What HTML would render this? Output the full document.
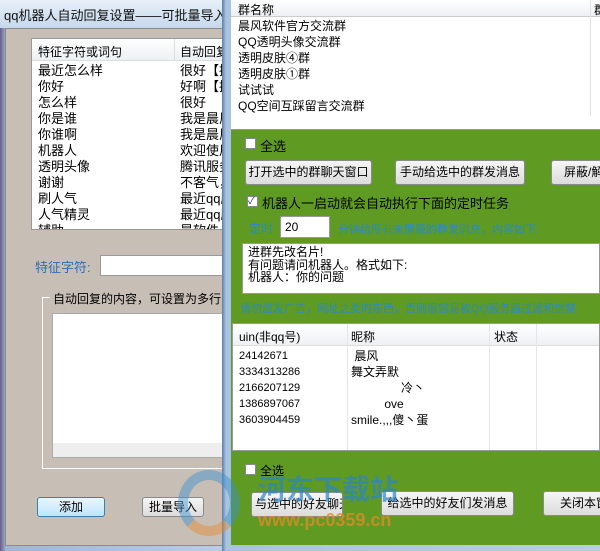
<!DOCTYPE html>
<html><head><meta charset="utf-8"><style>
*{margin:0;padding:0;box-sizing:border-box}
body{width:600px;height:551px;overflow:hidden;position:relative;background:#6f86a8;font-family:"Liberation Sans","Noto Sans CJK SC",sans-serif;font-size:12px;color:#000}
.a{position:absolute}
.btn{position:absolute;background:linear-gradient(#f6f6f6,#dcdcdc);border:1px solid #8a8a8a;border-radius:3px;text-align:center;font-size:12px;white-space:nowrap;overflow:hidden}
</style></head><body>
<!-- left window -->
<div class="a" style="left:0;top:0;width:226px;height:551px;background:linear-gradient(90deg,#6a5a8a,#9fb6d6 6px,#b9cde6)"></div>
<div class="a" style="left:0;top:0;width:226px;height:28px;background:linear-gradient(#e8f0f8,#c5d8ec)"></div>
<div class="a" style="left:4px;top:5px;font-size:13px;white-space:nowrap;color:#111">qq机器人自动回复设置——可批量导入别人</div>
<div class="a" style="left:5px;top:28px;width:221px;height:518px;background:#c7bfb5;border:1px solid #8e8a86"></div>
<div class="a" style="left:31px;top:38px;width:195px;height:192px;background:#fff;border:1px solid #999;overflow:hidden">
 <div class="a" style="left:0;top:0;width:195px;height:22px;background:linear-gradient(#fff,#eef0f3);border-bottom:1px solid #ddd"></div>
 <div class="a" style="left:6px;top:4px">特征字符或词句</div>
 <div class="a" style="left:142px;top:0;width:1px;height:22px;background:#ddd"></div>
 <div class="a" style="left:148px;top:4px;white-space:nowrap">自动回复</div>
 <div class="a" style="left:6px;top:24px;line-height:16px;font-size:13px">最近怎么样<br>你好<br>怎么样<br>你是谁<br>你谁啊<br>机器人<br>透明头像<br>谢谢<br>刷人气<br>人气精灵<br>辅助</div>
 <div class="a" style="left:148px;top:24px;line-height:16px;font-size:13px;white-space:nowrap">很好【换<br>好啊【换<br>很好<br>我是晨风<br>我是晨风<br>欢迎使用<br>腾讯服务<br>不客气，<br>最近qq服<br>最近qq服<br>晨软件品</div>
</div>
<div class="a" style="left:35px;top:257px;color:#2f6fb5;font-size:13px">特征字符:</div>
<div class="a" style="left:100px;top:255px;width:126px;height:21px;background:#fff;border:1px solid #999"></div>
<div class="a" style="left:42px;top:297px;width:184px;height:172px;border:1px solid #fff;border-right:none"></div>
<div class="a" style="left:50px;top:290px;background:#c7bfb5;padding:0 3px;white-space:nowrap">自动回复的内容，可设置为多行</div>
<div class="a" style="left:52px;top:313px;width:174px;height:145px;background:#fff;border:1px solid #aaa"></div>
<div class="a" style="left:53px;top:443px;width:173px;height:14px;background:#eee"></div>
<div class="btn" style="left:37px;top:497px;width:68px;height:20px;line-height:18px;border-color:#3c7fb1;background:linear-gradient(#eaf6fd,#bee6fd)">添加</div>
<div class="btn" style="left:142px;top:497px;width:62px;height:20px;line-height:18px">批量导入</div>
<!-- right window frame -->
<div class="a" style="left:222px;top:0;width:378px;height:551px;background:linear-gradient(90deg,#5b7da6,#a9c3e0 4px,#b7cde6)"></div>
<div class="a" style="left:231px;top:0;width:369px;height:130px;background:#fff;border-bottom:1px solid #999"></div>
<div class="a" style="left:231px;top:0;width:369px;height:17px;background:linear-gradient(#fff,#eef0f3);border-bottom:1px solid #ccc"></div>
<div class="a" style="left:238px;top:1px">群名称</div>
<div class="a" style="left:590px;top:0;width:1px;height:116px;background:#e3e3e3"></div>
<div class="a" style="left:594px;top:1px">群</div>
<div class="a" style="left:238px;top:18px;line-height:16px;white-space:nowrap">晨风软件官方交流群<br>QQ透明头像交流群<br>透明皮肤④群<br>透明皮肤①群<br>试试试<br>QQ空间互踩留言交流群</div>
<div class="a" style="left:231px;top:130px;width:369px;height:415px;background:#5f9a22"></div>
<div class="a" style="left:245px;top:138px;width:11px;height:11px;background:#fff;border:1px solid #888"></div>
<div class="a" style="left:260px;top:136px;color:#000;font-size:13px">全选</div>
<div class="btn" style="left:245px;top:160px;width:127px;height:25px;line-height:23px">打开选中的群聊天窗口</div>
<div class="btn" style="left:395px;top:160px;width:130px;height:25px;line-height:23px">手动给选中的群发消息</div>
<div class="btn" style="left:551px;top:160px;width:60px;height:25px;line-height:23px;text-align:left;padding-left:12px">屏蔽/解</div>
<div class="a" style="left:247px;top:196px;width:11px;height:11px;background:#fff;border:1px solid #888;font-size:10px;line-height:9px;color:#336">✓</div>
<div class="a" style="left:262px;top:193px;font-size:13px;white-space:nowrap">机器人一启动就会自动执行下面的定时任务</div>
<div class="a" style="left:249px;top:220px;color:#2a8ac8">定时</div>
<div class="a" style="left:280px;top:216px;width:50px;height:22px;background:#fff;border:1px solid #999;padding:3px 0 0 4px">20</div>
<div class="a" style="left:338px;top:221px;color:#2a8ac8;white-space:nowrap;font-size:11px">分钟给所有未屏蔽的群发消息，内容如下:</div>
<div class="a" style="left:242px;top:243px;width:358px;height:51px;background:#fff;border:1px solid #999;padding:2px 5px;line-height:12.5px;font-size:12px">进群先改名片!<br>有问题请问机器人。格式如下:<br>机器人：你的问题</div>
<div class="a" style="left:240px;top:300px;color:#2a8ac8;white-space:nowrap;font-size:11px">请勿滥发广告，网址之类的东西，否则很容易被QQ服务器过滤和封禁</div>
<div class="a" style="left:232px;top:323px;width:368px;height:128px;background:#fff;border:1px solid #999;overflow:hidden">
 <div class="a" style="left:0;top:0;width:368px;height:22px;background:linear-gradient(#fff,#eef0f3);border-bottom:1px solid #ddd"></div>
 <div class="a" style="left:6px;top:4px">uin(非qq号)</div>
 <div class="a" style="left:118px;top:4px">昵称</div>
 <div class="a" style="left:261px;top:4px">状态</div>
 <div class="a" style="left:114px;top:0;width:1px;height:128px;background:#e6e6e6"></div>
 <div class="a" style="left:256px;top:0;width:1px;height:128px;background:#e6e6e6"></div>
 <div class="a" style="left:303px;top:0;width:1px;height:128px;background:#e6e6e6"></div>
 <div class="a" style="left:6px;top:24px;line-height:16px;font-size:11px">24142671<br>3334313286<br>2166207129<br>1386897067<br>3603904459</div>
 <div class="a" style="left:118px;top:24px;line-height:16px;white-space:pre"> 晨风
舞文弄默
               冷丶
          ove
smile.,,,傻丶蛋</div>
</div>
<div class="a" style="left:245px;top:464px;width:11px;height:11px;background:#fff;border:1px solid #888"></div>
<div class="a" style="left:260px;top:462px">全选</div>
<div class="btn" style="left:251px;top:492px;width:92px;height:25px;line-height:23px;text-align:left;padding-left:3px">与选中的好友聊天</div>
<div class="btn" style="left:381px;top:491px;width:133px;height:25px;line-height:23px">给选中的好友们发消息</div>
<div class="btn" style="left:543px;top:491px;width:70px;height:25px;line-height:23px;text-align:left;padding-left:16px">关闭本窗</div>
<div class="a" style="left:258px;top:468px;color:#2d86c9;font-size:28px;font-weight:bold;opacity:.7;white-space:nowrap">河东下载站</div>
<div class="a" style="left:258px;top:510px;color:#e8892a;font-size:18px;font-weight:bold;opacity:.75">www.pc0359.cn</div>
<div class="a" style="left:178px;top:470px;width:62px;height:66px;border-radius:50%;border:10px solid #3a8fd0;border-bottom-color:#e8892a;opacity:.45"></div>
</body></html>
